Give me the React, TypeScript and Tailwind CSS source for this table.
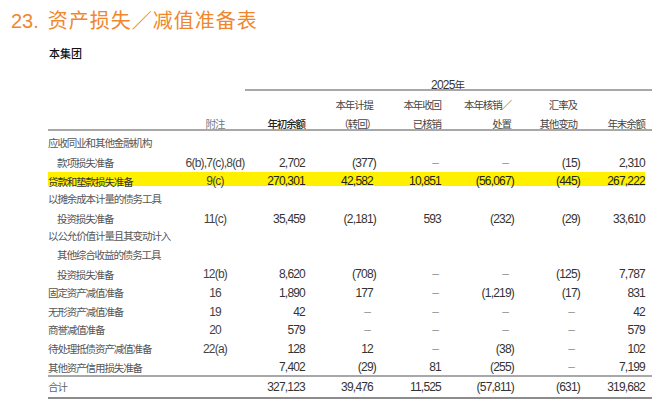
import React from "react";

const cjk = "font-['Noto_Sans_CJK_SC',sans-serif] text-[10.5px] tracking-[-1.1px]";
const num =
  "font-['Liberation_Sans','Noto_Sans_CJK_SC',sans-serif] text-[12px] tracking-[-0.8px]";
const grid = "grid grid-cols-[132px_70px_55px_68px_68px_70px_66px_68px] items-center";

type Row = {
  label: string;
  indent?: boolean;
  note?: string;
  vals?: string[];
  hl?: boolean;
};

const rows: Row[] = [
  { label: "应收同业和其他金融机构" },
  { label: "款项损失准备", indent: true, note: "6(b),7(c),8(d)", vals: ["2,702", "(377)", "–", "–", "(15)", "2,310"] },
  { label: "贷款和垫款损失准备", hl: true, note: "9(c)", vals: ["270,301", "42,582", "10,851", "(56,067)", "(445)", "267,222"] },
  { label: "以摊余成本计量的债务工具" },
  { label: "投资损失准备", indent: true, note: "11(c)", vals: ["35,459", "(2,181)", "593", "(232)", "(29)", "33,610"] },
  { label: "以公允价值计量且其变动计入" },
  { label: "其他综合收益的债务工具", indent: true },
  { label: "投资损失准备", indent: true, note: "12(b)", vals: ["8,620", "(708)", "–", "–", "(125)", "7,787"] },
  { label: "固定资产减值准备", note: "16", vals: ["1,890", "177", "–", "(1,219)", "(17)", "831"] },
  { label: "无形资产减值准备", note: "19", vals: ["42", "–", "–", "–", "–", "42"] },
  { label: "商誉减值准备", note: "20", vals: ["579", "–", "–", "–", "–", "579"] },
  { label: "待处理抵债资产减值准备", note: "22(a)", vals: ["128", "12", "–", "(38)", "–", "102"] },
  { label: "其他资产信用损失准备", vals: ["7,402", "(29)", "81", "(255)", "–", "7,199"] },
];

const total = ["327,123", "39,476", "11,525", "(57,811)", "(631)", "319,682"];

const Val = ({ v, dark }: { v: string; dark?: boolean }) => {
  if (v === "–") {
    return <div className={`${num} text-right pr-[3px] text-[#9a9a9a]`}>–</div>;
  }
  const neg = v.endsWith(")");
  return (
    <div className={`${num} text-right ${dark ? "text-[#222]" : "text-[#333]"} ${neg ? "mr-[-3px]" : ""}`}>
      {v}
    </div>
  );
};

const DataRow = ({ row }: { row: Row }) => {
  const inner = (
    <div className={`${grid} w-full h-[14px] ${row.hl ? "bg-[#fff000]" : ""}`}>
      <div className={`${cjk} ${row.hl ? "text-[#333]" : "text-[#555]"} ${row.indent ? "pl-[9px]" : ""} whitespace-nowrap`}>
        {row.label}
      </div>
      <div className={`${num} text-center text-[#444]`}>{row.note ?? ""}</div>
      {row.vals ? row.vals.map((v, i) => <Val key={i} v={v} dark={row.hl} />) : null}
    </div>
  );
  return <div className="h-[18.6px] flex items-center">{inner}</div>;
};

export default function App() {
  return (
    <div className="w-[665px] h-[412px] bg-white overflow-hidden">
      <h1 className="mt-[9px] pl-[11px] h-[24px] leading-[24px] text-[20px] text-[#f0872c] font-['Liberation_Sans','Noto_Sans_CJK_SC',sans-serif] whitespace-nowrap">
        23.<span className="ml-[9px] tracking-[1px]">资产损失／减值准备表</span>
      </h1>
      <p className="mt-[13px] ml-[49px] h-[14px] leading-[14px] text-[11px] font-medium text-[#111] font-['Noto_Sans_CJK_SC',sans-serif]">
        本集团
      </p>

      <div className="mt-[11px] ml-[48px] w-[604px] pr-[7px]">
        {/* year header */}
        <div className={`${grid} h-[18px]`}>
          <div className="col-start-3 col-span-6 text-center text-[#333]">
            <span className={num}>2025</span>
            <span className={cjk}>年</span>
          </div>
        </div>
        <div className={grid}>
          <div className="col-start-3 col-span-6 h-[2px] bg-[#a8a8a8] ml-[-5px] mr-[-7px]" />
        </div>

        {/* column headers */}
        <div className={`${grid} h-[19px] text-[#444]`}>
          <div className="col-start-4 text-right">
            <span className={cjk}>本年计提</span>
          </div>
          <div className="text-right">
            <span className={cjk}>本年收回</span>
          </div>
          <div className="text-right">
            <span className={cjk}>本年核销／</span>
          </div>
          <div className="text-right">
            <span className={cjk}>汇率及</span>
          </div>
        </div>
        <div className={`${grid} h-[19px] text-[#444]`}>
          <div />
          <div className="text-center text-[#777]">
            <span className={cjk}>附注</span>
          </div>
          <div className="text-right font-medium text-[#222]">
            <span className={cjk}>年初余额</span>
          </div>
          <div className="text-right mr-[-3px]">
            <span className={cjk}>（转回）</span>
          </div>
          <div className="text-right">
            <span className={cjk}>已核销</span>
          </div>
          <div className="text-right">
            <span className={cjk}>处置</span>
          </div>
          <div className="text-right">
            <span className={cjk}>其他变动</span>
          </div>
          <div className="text-right">
            <span className={cjk}>年末余额</span>
          </div>
        </div>
        <div className="h-[2px] bg-[#a8a8a8] mr-[-7px]" />

        {/* body */}
        <div className="pt-[2px]">
          {rows.map((r, i) => (
            <DataRow key={i} row={r} />
          ))}
        </div>
        <div className="h-[2px] bg-[#a8a8a8] mr-[-7px]" />
        <div className={`${grid} h-[20px]`}>
          <div className={`${cjk} text-[#666]`}>合计</div>
          <div />
          {total.map((v, i) => (
            <Val key={i} v={v} />
          ))}
        </div>
        <div className="h-[2px] bg-[#8c8c8c] mr-[-7px]" />
      </div>
    </div>
  );
}
